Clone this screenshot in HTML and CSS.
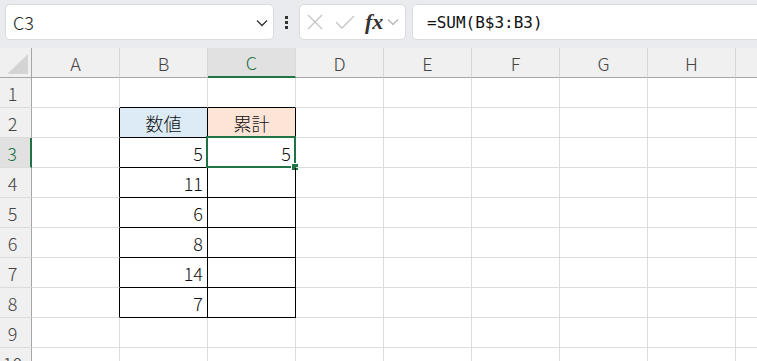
FILE: index.html
```html
<!DOCTYPE html>
<html lang="ja">
    <head>
        <meta charset="UTF-8" />
        <title>Book1 - Excel</title>
        <link rel="stylesheet" href="styles.css">
    </head>
    <body>
        <!-- name box + formula bar -->
        <div class="formula-bar">
            <div class="name-box">
                <span>C3</span>
                <svg class="chev" width="12" height="8" viewBox="0 0 12 8"><path d="M1 1.5 L6 6.5 L11 1.5" fill="none" stroke="#333" stroke-width="1.3"/></svg>
            </div>
            <div class="grip"><i></i><i></i><i></i></div>
            <div class="fx-box">
                <svg width="16" height="16" viewBox="0 0 16 16"><path d="M1 1 L15 15 M15 1 L1 15" stroke="#c4c4c4" stroke-width="1.3" fill="none"/></svg>
                <svg width="20" height="14" viewBox="0 0 20 14"><path d="M1 7 L7 13 L19 1" stroke="#c4c4c4" stroke-width="1.3" fill="none"/></svg>
                <span class="fx">fx</span>
                <svg width="12" height="8" viewBox="0 0 12 8"><path d="M1 1.5 L6 6.5 L11 1.5" fill="none" stroke="#b0b0b0" stroke-width="1.2"/></svg>
            </div>
            <div class="formula">=SUM(B$3:B3)</div>
        </div>

        <!-- worksheet grid -->
        <div class="sheet">
            <div class="corner"><span class="tri"></span></div>
            <div class="col-head">A</div>
            <div class="col-head">B</div>
            <div class="col-head active">C</div>
            <div class="col-head">D</div>
            <div class="col-head">E</div>
            <div class="col-head">F</div>
            <div class="col-head">G</div>
            <div class="col-head">H</div>
            <div class="col-head"></div>

            <div class="row-head">1</div>
            <div class="cell"></div><div class="cell top"></div><div class="cell top"></div><div class="cell"></div><div class="cell"></div><div class="cell"></div><div class="cell"></div><div class="cell"></div><div class="cell"></div>

            <div class="row-head">2</div>
            <div class="cell left"></div><div class="cell box hd blue">数値</div><div class="cell box hd peach">累計</div><div class="cell"></div><div class="cell"></div><div class="cell"></div><div class="cell"></div><div class="cell"></div><div class="cell"></div>

            <div class="row-head active">3</div>
            <div class="cell left"></div><div class="cell box num">5</div><div class="cell box num current">5<span class="sel"></span><span class="handle"></span></div><div class="cell"></div><div class="cell"></div><div class="cell"></div><div class="cell"></div><div class="cell"></div><div class="cell"></div>

            <div class="row-head">4</div>
            <div class="cell left"></div><div class="cell box num">11</div><div class="cell box"></div><div class="cell"></div><div class="cell"></div><div class="cell"></div><div class="cell"></div><div class="cell"></div><div class="cell"></div>

            <div class="row-head">5</div>
            <div class="cell left"></div><div class="cell box num">6</div><div class="cell box"></div><div class="cell"></div><div class="cell"></div><div class="cell"></div><div class="cell"></div><div class="cell"></div><div class="cell"></div>

            <div class="row-head">6</div>
            <div class="cell left"></div><div class="cell box num">8</div><div class="cell box"></div><div class="cell"></div><div class="cell"></div><div class="cell"></div><div class="cell"></div><div class="cell"></div><div class="cell"></div>

            <div class="row-head">7</div>
            <div class="cell left"></div><div class="cell box num">14</div><div class="cell box"></div><div class="cell"></div><div class="cell"></div><div class="cell"></div><div class="cell"></div><div class="cell"></div><div class="cell"></div>

            <div class="row-head">8</div>
            <div class="cell left"></div><div class="cell box num">7</div><div class="cell box"></div><div class="cell"></div><div class="cell"></div><div class="cell"></div><div class="cell"></div><div class="cell"></div><div class="cell"></div>

            <div class="row-head">9</div>
            <div class="cell"></div><div class="cell"></div><div class="cell"></div><div class="cell"></div><div class="cell"></div><div class="cell"></div><div class="cell"></div><div class="cell"></div><div class="cell"></div>

            <div class="row-head">10</div>
            <div class="cell"></div><div class="cell"></div><div class="cell"></div><div class="cell"></div><div class="cell"></div><div class="cell"></div><div class="cell"></div><div class="cell"></div><div class="cell"></div>
        </div>
    </body>
</html>
```

FILE: styles.css
```css
body {
    margin: 0;
    width: 757px;
    height: 361px;
    overflow: hidden;
    background-color: #fff;
    font-family: 'Noto Sans CJK JP', 'Noto Sans', sans-serif;
    color: #222;
}

/* top bar: name box, grip, fx buttons, formula input */
.formula-bar {
    display: flex;
    align-items: flex-start;
    height: 48px;
    box-sizing: border-box;
    padding: 4px 0 0 5px;
    background-color: #e9ebee;
    overflow: hidden;
}
.name-box,
.fx-box,
.formula {
    box-sizing: border-box;
    height: 36px;
    background-color: #fff;
    border: 1px solid #d9dbde;
    border-radius: 5px;
    display: flex;
    align-items: center;
}
.name-box {
    width: 269px;
    padding: 0 5px 0 7px;
    justify-content: space-between;
    font-size: 18px;
    font-weight: 300;
    color: #222;
}
.name-box .chev {
    margin-top: 1px;
}
.grip {
    width: 25px;
    height: 36px;
    display: flex;
    flex-direction: column;
    align-items: center;
    justify-content: center;
    gap: 2px;
}
.grip i {
    width: 3px;
    height: 3px;
    background-color: #333;
}
.fx-box {
    width: 107px;
    padding: 0 0 0 7px;
    gap: 12px;
}
.fx {
    font-family: 'Liberation Serif', serif;
    font-style: italic;
    font-weight: bold;
    font-size: 22px;
    color: #333;
    margin-left: -2px;
    margin-right: -8px;
    line-height: 1;
}
.formula {
    flex: 1;
    margin-left: 6px;
    margin-right: -10px;
    padding-left: 14px;
    font-family: 'DejaVu Sans Mono', monospace;
    font-size: 16px;
    color: #111;
}

/* worksheet */
.sheet {
    display: grid;
    grid-template-columns: 32px repeat(9, 88px);
    grid-auto-rows: 30px;
    font-size: 18px;
    font-weight: 300;
    line-height: 1;
}
.sheet > div {
    box-sizing: border-box;
    border-right: 1px solid #dcdcdc;
    border-bottom: 1px solid #dcdcdc;
    display: flex;
    align-items: center;
    position: relative;
}
.sheet .corner {
    background-color: #f0f0f0;
    border-right-color: #a6a6a6;
    border-bottom-color: #a6a6a6;
}
.tri {
    position: absolute;
    right: 3px;
    bottom: 3px;
    width: 0;
    height: 0;
    border-left: 21px solid transparent;
    border-bottom: 20px solid #d4d4d4;
}
.sheet .col-head {
    background-color: #f0f0f0;
    justify-content: center;
    color: #444;
    border-right-color: #d8d8d8;
    border-bottom-color: #a6a6a6;
}
.sheet .row-head {
    background-color: #f0f0f0;
    justify-content: center;
    padding-right: 6px;
    color: #444;
    border-right-color: #a6a6a6;
    border-bottom-color: #dcdcdc;
}
.sheet .col-head.active {
    background-color: #e1e1e1;
    color: #217346;
    border-bottom: 2px solid #217346;
}
.sheet .row-head.active {
    background-color: #e1e1e1;
    color: #217346;
    border-right: 2px solid #217346;
}

/* table borders */
.sheet .left {
    border-right-color: #000;
}
.sheet .top {
    border-bottom-color: #000;
}
.sheet .box {
    border-right-color: #000;
    border-bottom-color: #000;
    color: #111;
}
.hd {
    justify-content: center;
    color: #333;
}
.blue {
    background-color: #ddebf7;
}
.peach {
    background-color: #fce4d6;
}
.num {
    justify-content: flex-end;
    padding-right: 4px;
}

/* active cell */
.sel {
    position: absolute;
    left: -2px;
    top: -2px;
    right: -1px;
    bottom: -1px;
    border: 2px solid #217346;
}
.handle {
    position: absolute;
    right: -3px;
    bottom: -3px;
    width: 6px;
    height: 6px;
    background-color: #217346;
    outline: 1px solid #fff;
}
```
